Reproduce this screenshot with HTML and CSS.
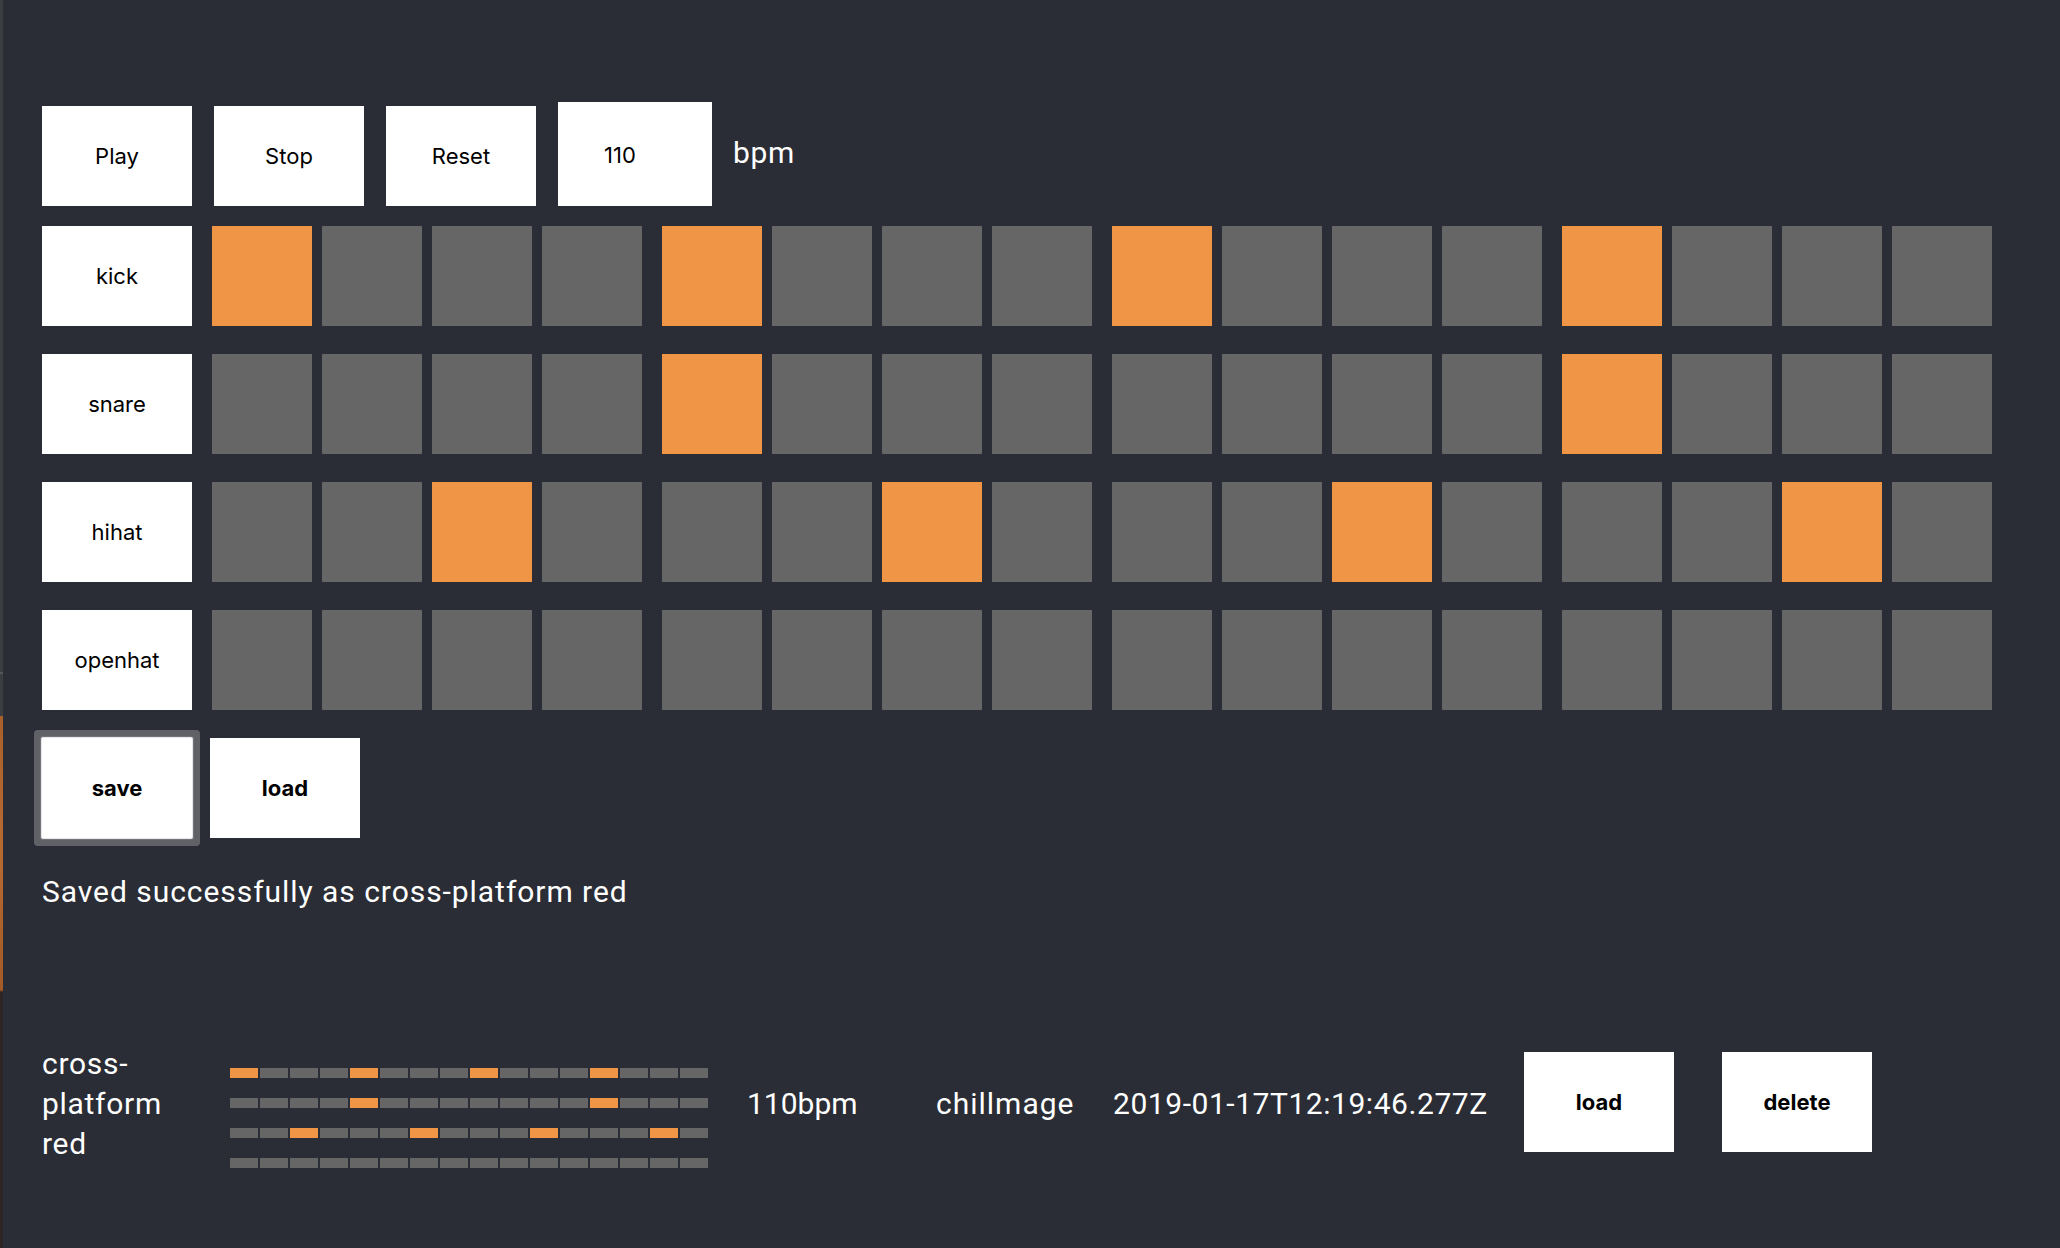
FILE: index.html
```html
<!DOCTYPE html>
<html>
<head>
<meta charset="utf-8">
<title>Drum machine</title>
<link rel="stylesheet" href="styles.css">
</head>
<body>
<div class="app">
  <div class="controls">
    <button class="btn">Play</button>
    <button class="btn">Stop</button>
    <button class="btn">Reset</button>
    <input class="tempo" type="text" value="110">
    <span class="bpm">bpm</span>
  </div>

  <div class="track">
    <button class="btn">kick</button>
    <div class="steps">
      <div class="group"><span class="cell on"></span><span class="cell"></span><span class="cell"></span><span class="cell"></span></div>
      <div class="group"><span class="cell on"></span><span class="cell"></span><span class="cell"></span><span class="cell"></span></div>
      <div class="group"><span class="cell on"></span><span class="cell"></span><span class="cell"></span><span class="cell"></span></div>
      <div class="group"><span class="cell on"></span><span class="cell"></span><span class="cell"></span><span class="cell"></span></div>
    </div>
  </div>
  <div class="track">
    <button class="btn">snare</button>
    <div class="steps">
      <div class="group"><span class="cell"></span><span class="cell"></span><span class="cell"></span><span class="cell"></span></div>
      <div class="group"><span class="cell on"></span><span class="cell"></span><span class="cell"></span><span class="cell"></span></div>
      <div class="group"><span class="cell"></span><span class="cell"></span><span class="cell"></span><span class="cell"></span></div>
      <div class="group"><span class="cell on"></span><span class="cell"></span><span class="cell"></span><span class="cell"></span></div>
    </div>
  </div>
  <div class="track">
    <button class="btn">hihat</button>
    <div class="steps">
      <div class="group"><span class="cell"></span><span class="cell"></span><span class="cell on"></span><span class="cell"></span></div>
      <div class="group"><span class="cell"></span><span class="cell"></span><span class="cell on"></span><span class="cell"></span></div>
      <div class="group"><span class="cell"></span><span class="cell"></span><span class="cell on"></span><span class="cell"></span></div>
      <div class="group"><span class="cell"></span><span class="cell"></span><span class="cell on"></span><span class="cell"></span></div>
    </div>
  </div>
  <div class="track">
    <button class="btn">openhat</button>
    <div class="steps">
      <div class="group"><span class="cell"></span><span class="cell"></span><span class="cell"></span><span class="cell"></span></div>
      <div class="group"><span class="cell"></span><span class="cell"></span><span class="cell"></span><span class="cell"></span></div>
      <div class="group"><span class="cell"></span><span class="cell"></span><span class="cell"></span><span class="cell"></span></div>
      <div class="group"><span class="cell"></span><span class="cell"></span><span class="cell"></span><span class="cell"></span></div>
    </div>
  </div>

  <div class="saverow">
    <button class="btn bold focused">save</button>
    <button class="btn bold">load</button>
  </div>

  <p class="status">Saved successfully as cross-platform red</p>

  <div class="saved">
    <div class="name">cross-platform red</div>
    <div class="mini">
      <div class="mrow"><span class="m on"></span><span class="m"></span><span class="m"></span><span class="m"></span><span class="m on"></span><span class="m"></span><span class="m"></span><span class="m"></span><span class="m on"></span><span class="m"></span><span class="m"></span><span class="m"></span><span class="m on"></span><span class="m"></span><span class="m"></span><span class="m"></span></div>
      <div class="mrow"><span class="m"></span><span class="m"></span><span class="m"></span><span class="m"></span><span class="m on"></span><span class="m"></span><span class="m"></span><span class="m"></span><span class="m"></span><span class="m"></span><span class="m"></span><span class="m"></span><span class="m on"></span><span class="m"></span><span class="m"></span><span class="m"></span></div>
      <div class="mrow"><span class="m"></span><span class="m"></span><span class="m on"></span><span class="m"></span><span class="m"></span><span class="m"></span><span class="m on"></span><span class="m"></span><span class="m"></span><span class="m"></span><span class="m on"></span><span class="m"></span><span class="m"></span><span class="m"></span><span class="m on"></span><span class="m"></span></div>
      <div class="mrow"><span class="m"></span><span class="m"></span><span class="m"></span><span class="m"></span><span class="m"></span><span class="m"></span><span class="m"></span><span class="m"></span><span class="m"></span><span class="m"></span><span class="m"></span><span class="m"></span><span class="m"></span><span class="m"></span><span class="m"></span><span class="m"></span></div>
    </div>
    <div class="col-bpm">110bpm</div>
    <div class="col-user">chillmage</div>
    <div class="col-date">2019-01-17T12:19:46.277Z</div>
    <button class="btn bold small">load</button>
    <button class="btn bold small del">delete</button>
  </div>
</div>
</body>
</html>
```

FILE: styles.css
```css
html, body {
  margin: 0;
  padding: 0;
  background: #2a2d35;
  height: 100%;
}

body {
  font-family: Roboto, "Noto Sans", sans-serif;
  color: #ffffff;
  overflow: hidden;
}

body::before {
  content: "";
  position: fixed;
  left: 0;
  top: 0;
  width: 3px;
  height: 100%;
  background: linear-gradient(to bottom,
    #3c3d40 0, #3c3d40 672px, #55565a 672px, #55565a 674px, #3c3d40 674px, #3c3d40 716px,
    #a8602a 716px, #b86a30 850px, #a35a26 990px,
    #2c2425 992px, #2c2425 100%);
}

.app {
  padding: 102px 0 0 42px;
}

.btn {
  box-sizing: border-box;
  width: 150px;
  height: 100px;
  margin: 0;
  padding: 0;
  border: none;
  border-radius: 0;
  background: #ffffff;
  color: #000000;
  font-family: Inter, "Noto Sans", sans-serif;
  font-size: 22px;
  font-weight: 400;
  flex: none;
}

.btn.bold {
  font-weight: 700;
}

.controls {
  display: flex;
  align-items: flex-end;
  gap: 22px;
  height: 104px;
}

.tempo {
  box-sizing: border-box;
  width: 154px;
  height: 104px;
  margin: 0;
  padding: 2px 0 0 46px;
  border: none;
  background: #ffffff;
  color: #000000;
  font-family: Inter, "Noto Sans", sans-serif;
  font-size: 22px;
  outline: none;
}

.bpm {
  font-size: 30px;
  line-height: 36px;
  letter-spacing: 0.6px;
  margin-left: -1px;
  margin-bottom: 35px;
}

.track {
  display: flex;
  margin-top: 20px;
}

.track + .track {
  margin-top: 28px;
}

.steps {
  display: flex;
  gap: 20px;
  margin-left: 20px;
}

.group {
  display: flex;
  gap: 10px;
}

.cell {
  display: block;
  width: 100px;
  height: 100px;
  background: #666666;
}

.cell.on {
  background: #f09446;
}

.saverow {
  display: flex;
  gap: 18px;
  margin-top: 28px;
}

.focused {
  border-radius: 1px;
  box-shadow: 0 0 0 1px #e6e6ea, 0 0 0 2px #73747a, 0 0 0 8px #606167;
}

.status {
  margin: 36px 0 0 0;
  font-size: 30px;
  line-height: 36px;
  letter-spacing: 0.95px;
}

.saved {
  display: flex;
  align-items: center;
  margin-top: 134px;
}

.name {
  width: 150px;
  font-size: 30px;
  line-height: 40px;
  letter-spacing: 0.7px;
  flex: none;
}

.mini {
  display: flex;
  flex-direction: column;
  gap: 20px;
  margin-left: 38px;
  align-self: flex-start;
  margin-top: 24px;
  margin-bottom: -10px;
}

.mrow {
  display: flex;
  gap: 2px;
}

.m {
  display: block;
  width: 28px;
  height: 10px;
  background: #666666;
}

.m.on {
  background: #f09446;
}

.col-bpm, .col-user, .col-date {
  font-size: 30px;
  line-height: 40px;
  flex: none;
}

.col-bpm {
  margin-left: 39px;
  width: 189px;
}

.col-user {
  width: 177px;
  letter-spacing: 1px;
}

.col-date {
  width: 411px;
  letter-spacing: 0.55px;
}

.small {
  margin-top: -4px;
}

.del {
  margin-left: 48px;
}
```
